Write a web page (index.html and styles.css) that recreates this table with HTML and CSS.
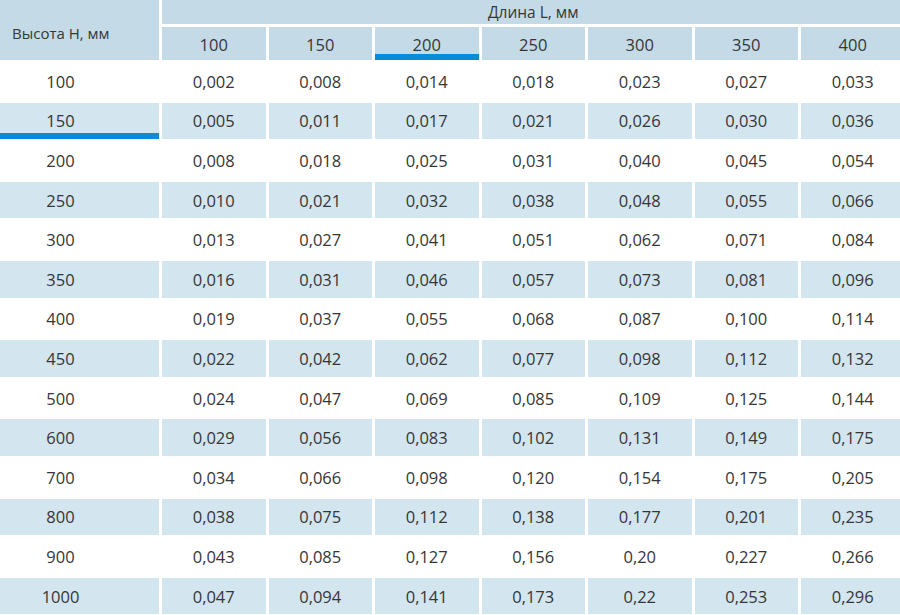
FILE: index.html
```html
<!DOCTYPE html>
<html lang="ru">
<head>
<meta charset="utf-8">
<title>Таблица</title>
<link rel="stylesheet" href="styles.css">
</head>
<body>
<div class="viewport">
  <div class="table">
    <div class="corner">Высота H, мм</div>
    <div class="title">Длина L, мм</div>
    <div class="hcol">100</div>
    <div class="hcol">150</div>
    <div class="hcol active">200</div>
    <div class="hcol">250</div>
    <div class="hcol">300</div>
    <div class="hcol">350</div>
    <div class="hcol">400</div>

    <div class="row"><div class="rh">100</div><div>0,002</div><div>0,008</div><div>0,014</div><div>0,018</div><div>0,023</div><div>0,027</div><div>0,033</div></div>
    <div class="row alt"><div class="rh active">150</div><div>0,005</div><div>0,011</div><div>0,017</div><div>0,021</div><div>0,026</div><div>0,030</div><div>0,036</div></div>
    <div class="row"><div class="rh">200</div><div>0,008</div><div>0,018</div><div>0,025</div><div>0,031</div><div>0,040</div><div>0,045</div><div>0,054</div></div>
    <div class="row alt"><div class="rh">250</div><div>0,010</div><div>0,021</div><div>0,032</div><div>0,038</div><div>0,048</div><div>0,055</div><div>0,066</div></div>
    <div class="row"><div class="rh">300</div><div>0,013</div><div>0,027</div><div>0,041</div><div>0,051</div><div>0,062</div><div>0,071</div><div>0,084</div></div>
    <div class="row alt"><div class="rh">350</div><div>0,016</div><div>0,031</div><div>0,046</div><div>0,057</div><div>0,073</div><div>0,081</div><div>0,096</div></div>
    <div class="row"><div class="rh">400</div><div>0,019</div><div>0,037</div><div>0,055</div><div>0,068</div><div>0,087</div><div>0,100</div><div>0,114</div></div>
    <div class="row alt"><div class="rh">450</div><div>0,022</div><div>0,042</div><div>0,062</div><div>0,077</div><div>0,098</div><div>0,112</div><div>0,132</div></div>
    <div class="row"><div class="rh">500</div><div>0,024</div><div>0,047</div><div>0,069</div><div>0,085</div><div>0,109</div><div>0,125</div><div>0,144</div></div>
    <div class="row alt"><div class="rh">600</div><div>0,029</div><div>0,056</div><div>0,083</div><div>0,102</div><div>0,131</div><div>0,149</div><div>0,175</div></div>
    <div class="row"><div class="rh">700</div><div>0,034</div><div>0,066</div><div>0,098</div><div>0,120</div><div>0,154</div><div>0,175</div><div>0,205</div></div>
    <div class="row alt"><div class="rh">800</div><div>0,038</div><div>0,075</div><div>0,112</div><div>0,138</div><div>0,177</div><div>0,201</div><div>0,235</div></div>
    <div class="row"><div class="rh">900</div><div>0,043</div><div>0,085</div><div>0,127</div><div>0,156</div><div>0,20</div><div>0,227</div><div>0,266</div></div>
    <div class="row alt"><div class="rh">1000</div><div>0,047</div><div>0,094</div><div>0,141</div><div>0,173</div><div>0,22</div><div>0,253</div><div>0,296</div></div>
  </div>
</div>
</body>
</html>
```
FILE: styles.css
```css
html, body {
  margin: 0;
  padding: 0;
  background: #ffffff;
}
body {
  width: 900px;
  height: 615px;
  overflow: hidden;
  font-family: "Open Sans", "Noto Sans", sans-serif;
  color: #363636;
}
.viewport {
  width: 900px;
  height: 615px;
  overflow: hidden;
}
.table {
  display: grid;
  grid-template-columns: 159px repeat(7, 103.5px);
  grid-template-rows: 24px 33px repeat(14, 36.6px);
  gap: 3px;
  width: 904.5px;
}
.table > div,
.row > div {
  display: flex;
  align-items: center;
  justify-content: center;
  font-size: 16.5px;
}
.corner {
  grid-row: 1 / span 2;
  grid-column: 1;
  background: #c4dbe7;
  justify-content: flex-start !important;
  padding-left: 12px;
  padding-top: 5px;
  font-size: 15px !important;
}
.title {
  grid-column: 2 / span 7;
  background: #c4dbe7;
  font-size: 15.5px !important;
  padding-bottom: 1px;
}
.hcol {
  background: #c4dbe7;
  padding-top: 1px;
}
.row {
  display: contents !important;
}
.row .rh {
  padding-right: 38px;
}
.row.alt > div {
  background: #d3e5ef;
}
.active {
  box-shadow: inset 0 -6px 0 #0a8bd8;
}
```
